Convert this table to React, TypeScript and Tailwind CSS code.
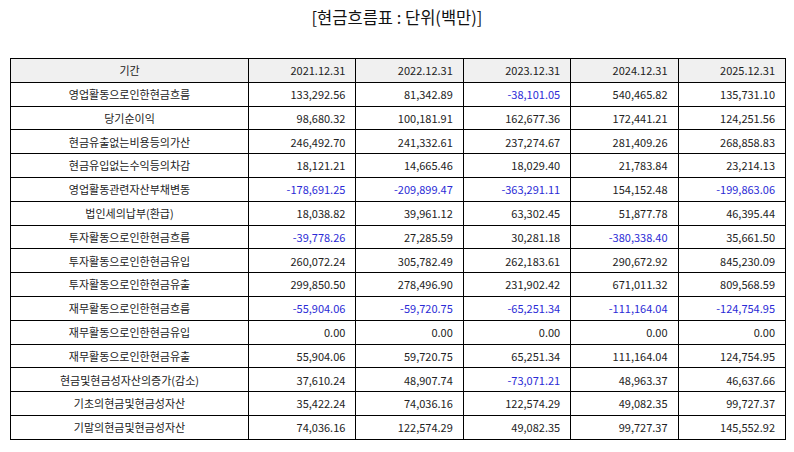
const cols = ['2021.12.31', '2022.12.31', '2023.12.31', '2024.12.31', '2025.12.31'];

const rows: [string, string[]][] = [
  ['영업활동으로인한현금흐름', ['133,292.56', '81,342.89', '-38,101.05', '540,465.82', '135,731.10']],
  ['당기순이익', ['98,680.32', '100,181.91', '162,677.36', '172,441.21', '124,251.56']],
  ['현금유출없는비용등의가산', ['246,492.70', '241,332.61', '237,274.67', '281,409.26', '268,858.83']],
  ['현금유입없는수익등의차감', ['18,121.21', '14,665.46', '18,029.40', '21,783.84', '23,214.13']],
  ['영업활동관련자산부채변동', ['-178,691.25', '-209,899.47', '-363,291.11', '154,152.48', '-199,863.06']],
  ['법인세의납부(환급)', ['18,038.82', '39,961.12', '63,302.45', '51,877.78', '46,395.44']],
  ['투자활동으로인한현금흐름', ['-39,778.26', '27,285.59', '30,281.18', '-380,338.40', '35,661.50']],
  ['투자활동으로인한현금유입', ['260,072.24', '305,782.49', '262,183.61', '290,672.92', '845,230.09']],
  ['투자활동으로인한현금유출', ['299,850.50', '278,496.90', '231,902.42', '671,011.32', '809,568.59']],
  ['재무활동으로인한현금흐름', ['-55,904.06', '-59,720.75', '-65,251.34', '-111,164.04', '-124,754.95']],
  ['재무활동으로인한현금유입', ['0.00', '0.00', '0.00', '0.00', '0.00']],
  ['재무활동으로인한현금유출', ['55,904.06', '59,720.75', '65,251.34', '111,164.04', '124,754.95']],
  ['현금및현금성자산의증가(감소)', ['37,610.24', '48,907.74', '-73,071.21', '48,963.37', '46,637.66']],
  ['기초의현금및현금성자산', ['35,422.24', '74,036.16', '122,574.29', '49,082.35', '99,727.37']],
  ['기말의현금및현금성자산', ['74,036.16', '122,574.29', '49,082.35', '99,727.37', '145,552.92']],
];

export default function App() {
  return (
    <div className="w-[794px] h-[452px] bg-white text-[#222] font-['Noto_Sans_CJK_KR','Noto_Sans',sans-serif]">
      <h1 className="pt-[5px] h-[58px] text-center text-[16.5px] leading-[24px] text-[#111]">
        [현금흐름표 : 단위(백만)]
      </h1>
      <table className="ml-[10px] w-[776px] table-fixed border-collapse text-[11px]">
        <colgroup>
          <col className="w-[238px]" />
          {cols.map((c) => (
            <col key={c} />
          ))}
        </colgroup>
        <thead>
          <tr className="h-[23.8px] bg-[#f0f0f0]">
            <th className="border border-black p-0 font-normal text-center">기간</th>
            {cols.map((c) => (
              <th key={c} className="border border-black p-0 font-normal text-right pr-[10px]">
                {c}
              </th>
            ))}
          </tr>
        </thead>
        <tbody>
          {rows.map(([label, vals]) => (
            <tr key={label} className="h-[23.8px]">
              <td className="border border-black p-0 text-center">{label}</td>
              {vals.map((v, i) => (
                <td
                  key={i}
                  className={`border border-black p-0 text-right pr-[10px] ${v.startsWith('-') ? 'text-[#2b2bd6]' : ''}`}
                >
                  {v}
                </td>
              ))}
            </tr>
          ))}
        </tbody>
      </table>
    </div>
  );
}
